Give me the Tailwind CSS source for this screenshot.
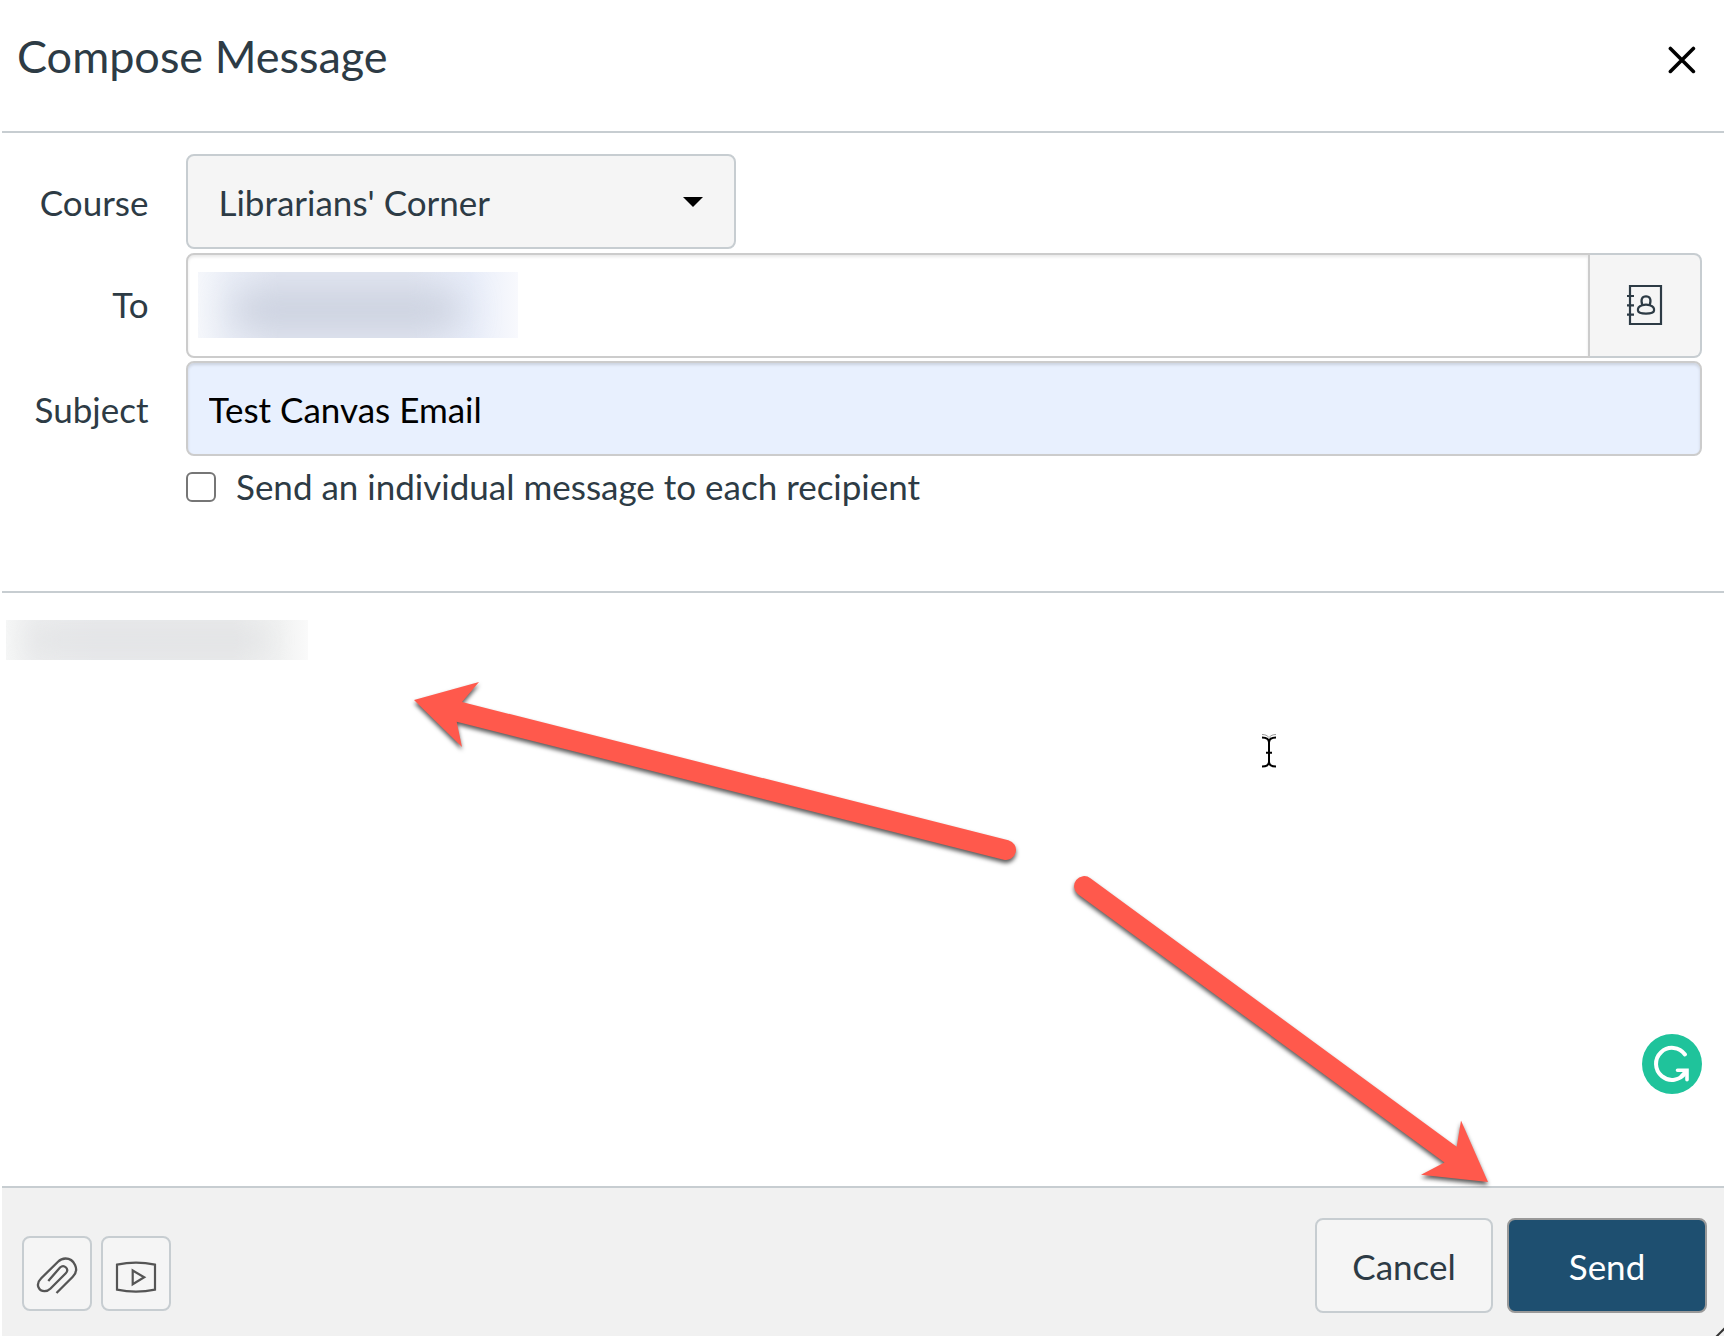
<!DOCTYPE html>
<html lang="en">
<head>
  <meta charset="UTF-8">
  <meta name="viewport" content="width=device-width, initial-scale=1.0">
  <title>Compose Message</title>
  <script src="https://cdn.jsdelivr.net/npm/@tailwindcss/browser@4"></script>
  <style>
    body {
      font-family: 'Lato', sans-serif;
    }
  </style>
</head>
<body class="bg-white overflow-hidden">
  <div class="relative flex flex-col w-[1724px] h-[1336px] pl-0.5 text-[35px] leading-[42px] text-[#2d3b45]">

    <!-- Title bar -->
    <header class="flex items-center justify-between h-[133px] pl-[15px] pr-7 pb-[16px] border-b-2 border-[#c7cdd1]">
      <h1 class="-mt-[3px] text-[45px] leading-[54px]">Compose Message</h1>
      <button aria-label="Close" class="mt-[5px]">
        <svg class="block w-7 h-7" viewBox="0 0 28 28" fill="none" stroke="#000" stroke-width="3.6" stroke-linecap="round">
          <path d="M2.4 2.4 25.4 25.4M25.4 2.4 2.4 25.4"/>
        </svg>
      </button>
    </header>

    <!-- Course, recipients, subject -->
    <form class="flex flex-col h-[460px] pt-[21px] pr-[22px] border-b-2 border-[#c7cdd1]">
      <div class="flex items-center h-[95px] mb-1">
        <label class="w-[146.5px] mr-[37.5px] pt-px text-right">Course</label>
        <button type="button" class="flex items-center justify-between w-[550px] h-[95px] pl-[30.5px] pr-[31px] bg-[#f5f5f5] border-2 border-[#c7cdd1] rounded-lg">
          <span class="pt-px">Librarians' Corner</span>
          <svg class="block w-5 h-2.5" viewBox="0 0 20 10"><path d="M0 0h20L10 10z"/></svg>
        </button>
      </div>

      <div class="flex items-center h-[105px] mb-[3px]">
        <label class="w-[146.5px] mr-[37.5px] pb-1 text-right">To</label>
        <div class="flex flex-1 h-[105px]">
          <div class="flex-1 pl-2.5 pt-[17px] bg-white border-2 border-[#ccc] rounded-l-lg shadow-[inset_0_2px_3px_rgba(0,0,0,0.09)]">
            <div class="w-[320px] h-[66px] overflow-hidden bg-[linear-gradient(90deg,#f5f7fb,#eaeef7_10%,#e2e6f1_25%,#e2e6f1_65%,#e8edf9_85%,#f8f9fd)]">
              <div class="w-[230px] h-[36px] mt-[20px] ml-[34px] rounded-full bg-[#c9cfdd] blur-[18px]"></div>
            </div>
          </div>
          <button type="button" aria-label="Address book" class="flex items-center justify-center w-[112px] pb-[1px] pr-[1px] bg-[#f5f5f5] border-y-2 border-r-2 border-[#c7cdd1] rounded-r-lg">
            <svg class="block w-9 h-10" viewBox="0 0 36 40" fill="none" stroke="#2d3b45" stroke-width="2.2">
              <path d="M3 1h31v38H3z"/>
              <path d="M0 11h7M0 20.300h7M0 29.700h7"/>
              <path d="M15.300 20.300c-2-6.400 0-9 3.700-9s5.700 2.600 3.700 9"/>
              <path d="M15.300 20.300c2.400-.9 5-.9 7.400 0 3.200 1 4.800 3 4.300 5.400-.7 3.800-15.300 3.800-16 0-.5-2.400 1.100-4.400 4.300-5.400z"/>
            </svg>
          </button>
        </div>
      </div>

      <div class="flex items-center h-[95px]">
        <label for="subject" class="w-[146.5px] mr-[37.5px] pt-px text-right">Subject</label>
        <input id="subject" type="text" value="Test Canvas Email" class="flex-1 h-[95px] pt-px pl-[20.5px] text-black bg-[#e8f0fe] border-2 border-[#ccc] rounded-lg shadow-[inset_0_2px_3px_rgba(0,0,0,0.12)]">
      </div>

      <label class="flex items-center h-[62px] pl-[184px]">
        <input type="checkbox" class="appearance-none w-[30px] h-[30px] bg-white border-2 border-[#767676] rounded-md">
        <span class="ml-5 pb-[2px]">Send an individual message to each recipient</span>
      </label>
    </form>

    <!-- Message body -->
    <main class="relative flex-1 pt-[27px] pl-1">
      <div class="w-[302px] h-10 overflow-hidden bg-[linear-gradient(90deg,#f5f6f6,#ecedee_10%,#e8e9eb_30%,#e8e9ea_75%,#f0f1f1_90%,#fafafa)]">
        <div class="w-[240px] h-[16px] mt-[12px] ml-[22px] rounded-full bg-[#e1e2e4] blur-[12px]"></div>
      </div>

      <!-- Grammar checker badge -->
      <svg class="absolute right-[22px] bottom-[92px] w-[60px] h-[60px]" viewBox="0 0 60 60" fill="none">
        <circle cx="30" cy="30" r="30" fill="#1fc39b"/>
        <path d="M43 20.500A16 16 0 1 0 43.500 38.500" stroke="#fff" stroke-width="4" stroke-linecap="round"/>
        <path d="M35.500 36.300h9.500v9.500M45 36.300 39 42.500" stroke="#fff" stroke-width="3.600" stroke-linecap="round"/>
      </svg>
    </main>

    <!-- Actions -->
    <footer class="flex items-start justify-between h-[150px] pl-5 pr-[17px] bg-[#f1f1f1] border-t-2 border-[#c7cdd1]">
      <div class="flex gap-[9px] pt-12">
        <button aria-label="Attach file" class="w-[70px] h-[75px] bg-[#f5f5f5] border-2 border-[#c7cdd1] rounded-lg">
          <svg class="block w-[66px] h-[71px]" viewBox="24 1238 66 71" fill="none" stroke="#555" stroke-width="2.3">
            <path d="M56.500 1293 72.800 1276.700C80 1269.500 74 1258.500 65.500 1258.500 62.600 1258.500 60 1259.700 58 1261.700L41.200 1278.300C34.500 1285 39.500 1291.200 44.500 1291.200 46.800 1291.200 48.800 1290.200 50.300 1288.700L65.800 1273.300C70 1269 64 1264 60 1267.500L48.300 1281"/>
          </svg>
        </button>
        <button aria-label="Record media" class="w-[70px] h-[75px] bg-[#f5f5f5] border-2 border-[#c7cdd1] rounded-lg">
          <svg class="block w-[66px] h-[71px]" viewBox="103 1238 66 71" fill="none" stroke="#555" stroke-width="2.2">
            <path d="M117 1264.700Q136 1260.700 155 1264.700V1289.700Q136 1293.700 117 1289.700z"/>
            <path d="M132.700 1270.500 144.200 1277.300 132.700 1284.200z"/>
          </svg>
        </button>
      </div>
      <div class="flex gap-3.5 pt-[30px]">
        <button class="w-[178px] h-[95px] pt-px bg-[#f5f5f5] border-2 border-[#c7cdd1] rounded-lg">Cancel</button>
        <button class="w-[200px] h-[95px] pt-px text-white bg-[#1e4f70] border-2 border-[#999] rounded-lg">Send</button>
      </div>
    </footer>

    <!-- Arrows, text cursor and resize corner drawn over the dialog -->
    <svg class="absolute left-0 top-0 w-[1724px] h-[1336px] pointer-events-none" viewBox="0 0 1724 1336" fill="none">
      <g fill="#ff594c" class="drop-shadow-[0_3px_2px_rgba(0,0,0,0.65)]">
        <path d="M414 700 479 682 462 702 1008.400 840.200A10 10 0 0 1 1003.600 859.700L456.700 721.700 462 747z"/>
        <path d="M1488 1182 1461 1120.500 1456.700 1146.700 1090.400 878.200A10 10 0 0 0 1078 894.200L1444.500 1162.500 1421 1174.700z"/>
      </g>
      <path d="M1262 737.500c4 0 7 1.500 7 5 0-3.500 3-5 7-5M1269 741v23M1262 766.500c4 0 7-1.500 7-5 0 3.500 3 5 7 5M1266 752.700h6" stroke="#000" stroke-width="2"/>
      <path d="M1262 734.500c3 0 5.500 1 7 3 1.500-2 4-3 7-3" stroke="#999" stroke-width="1"/>
      <path d="M1716 1337 1725 1328" stroke="#333" stroke-width="2"/>
    </svg>
  </div>
</body>
</html>
